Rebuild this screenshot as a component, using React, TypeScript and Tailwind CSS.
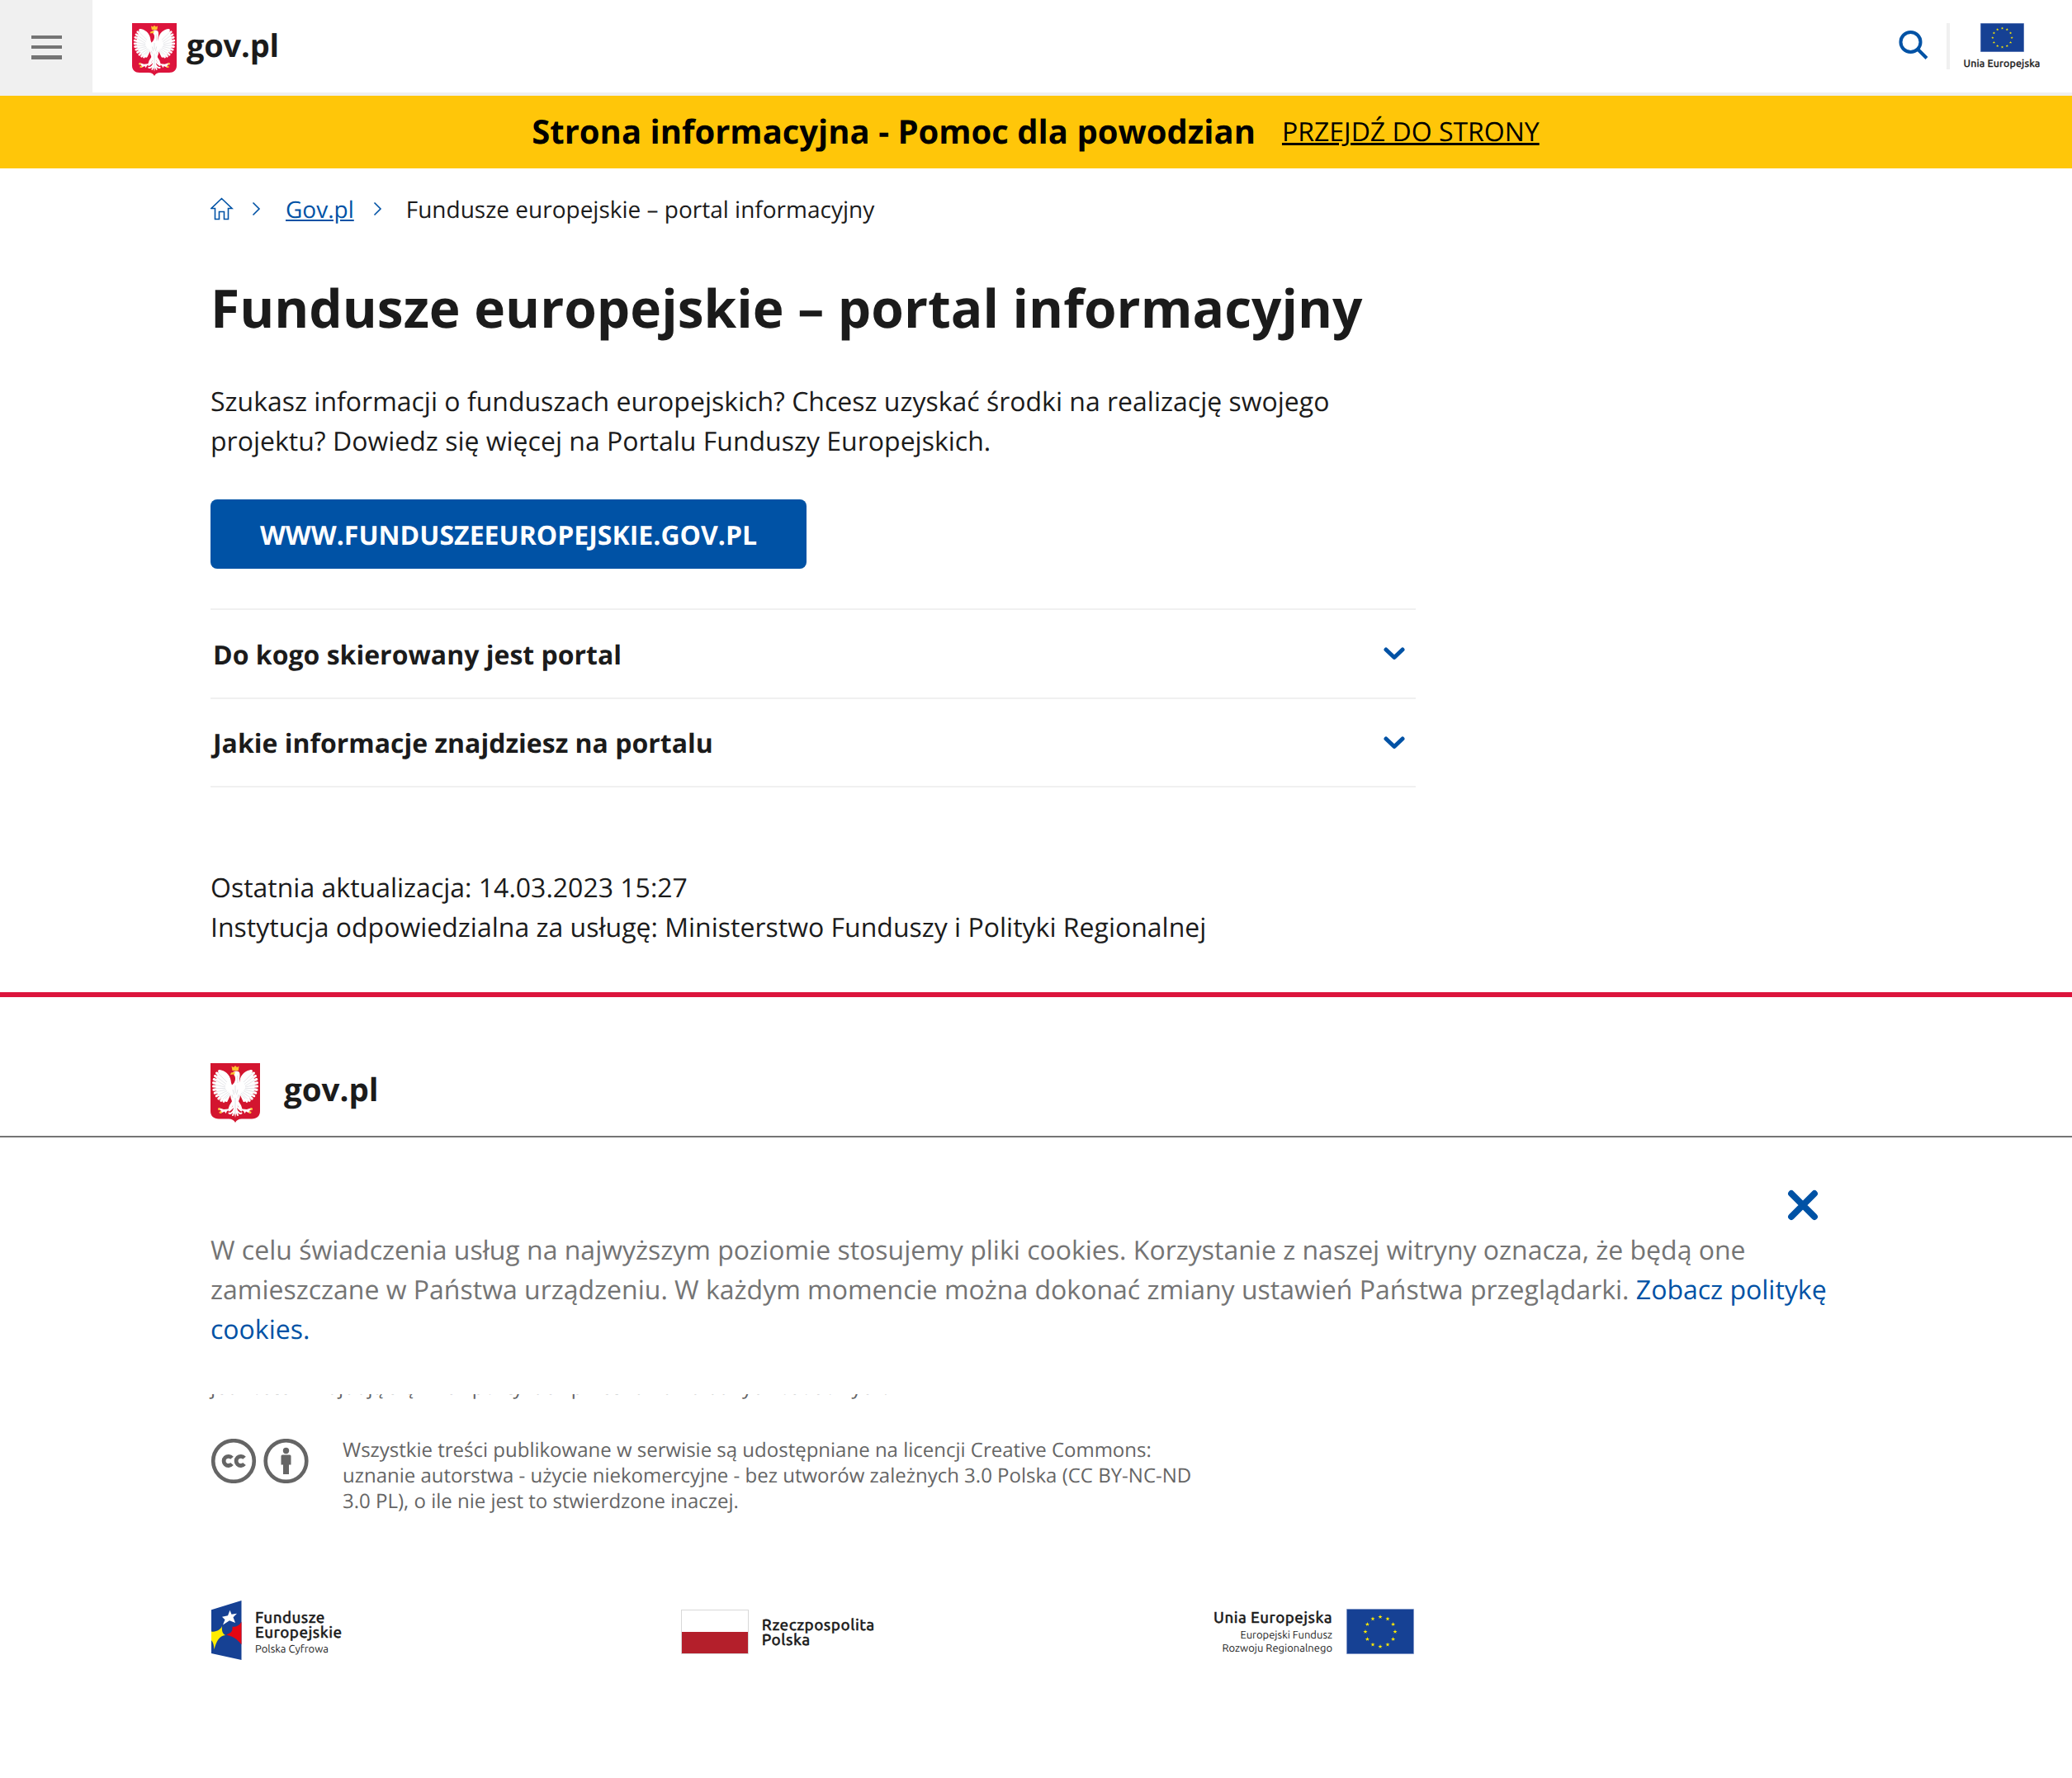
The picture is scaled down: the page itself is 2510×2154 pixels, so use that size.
const INK = 'text-[#1b1b1b]';

const FEATHERS = [
  'M20 20L10.500 9.500', 'M20 22L7.500 12', 'M20 24L5.500 15.500', 'M20 26L4.200 19.500', 'M20 28L3.500 23.700',
  'M20 29L3.500 28', 'M20 30L3.900 32.200', 'M20 31L5.200 36.200', 'M21 32L7.200 39.800', 'M22 33L9.800 43',
  'M23 33L12.800 45.300', 'M24 33L16 46.300', 'M25 33L19.200 45.500',
].join('');

function Wing() {
  return (
    <>
      <path d={FEATHERS} stroke="#fff" strokeWidth="3" strokeLinecap="round" fill="none" />
      <path d="M10.500 8C17.500 8.500 23.500 14 24.600 21C25 25 26 27 28 28L27.500 39L24.500 38C21 43 16 44.500 12 41.500C6 36 5 25 8 16Z" fill="#fff" />
      <path
        d="M9.500 12.500L20 23M7 16L19 25.500M5.500 20L18 27.500M5 26L18 29M5 30.500L18 30.500M6 35L19 32M8.500 39L20 33.500M11.500 42L21.500 35M15 43.500L23 36M18 43L24.500 37"
        stroke="#d0d2d8"
        strokeWidth=".55"
        fill="none"
      />
    </>
  );
}

function Eagle({ className, red }: { className: string; red: string }) {
  return (
    <svg className={className} viewBox="0 0 60 72" preserveAspectRatio="none" aria-hidden="true">
      <path d="M0 0H60V58C60 64 56 67.500 50 67.500H38C34 67.500 31.500 69 30 72C28.500 69 26 67.500 22 67.500H10C4 67.500 0 64 0 58Z" fill={red} />
      <Wing />
      <g transform="translate(60 0) scale(-1 1)">
        <Wing />
      </g>
      <g fill="#fff">
        <path d="M27 11.500C28 9 34 8.500 35.300 12C36 15 35 18 35 21C35 25 37 28 36.500 33L35.500 42C34 46 33 49 32.500 53L30 66L27.500 53C27 49 26 46 24.500 42L23.500 33C23 29 26 27 28.500 24C30.500 21 30.500 17 29 15Z" />
        <path d="M24 38L28 43L23 51L21.500 55.500L16 56L10 54L9 56L13 57.500L10.500 60L13 60.500L17 58.500L18.500 61L20 58L25 55.500L29.500 46Z" />
        <path d="M36 38L32 43L37 51L38.500 55.500L44 56L50 54L51 56L47 57.500L49.500 60L47 60.500L43 58.500L41.500 61L40 58L35 55.500L30.500 46Z" />
      </g>
      <g stroke="#fff" fill="none" strokeLinecap="round" strokeWidth="2">
        <path d="M28 52C27 55 24 56.500 22.500 57.500M28.500 56C27.500 59 24 62 22.500 60.500M29 58L27 63M32 52C33 55 36 56.500 37.500 57.500M31.500 56C32.500 59 36 62 37.500 60.500M31 58L33 63" />
      </g>
      <g stroke="#c9cbd1" strokeWidth=".6" fill="none">
        <path d="M30 27V36M27 32L28.500 38M33 32L31.500 38M30 42V62M26 38L27 42M34 38L33 42M32.500 15L33 24" />
      </g>
      <g fill="#fdc32f">
        <path d="M25.500 3.800L28 5L30 3L32 5L34.500 3.800L33.700 9H26.500Z" />
        <path d="M30 10.500L25 11.500L24 14L28 13.500L28.500 15Z" />
        <path d="M8.800 55L11 54L12 56L9.800 57.200ZM10.500 59L13 58L14 60L11 61ZM51.200 55L49 54L48 56L50.200 57.200ZM49.500 59L47 58L46 60L49 61Z" />
      </g>
    </svg>
  );
}

const STAR = 'M0 -2.700L.62 -.85L2.570 -.83L1 .33L1.590 2.180L0 1.050L-1.590 2.180L-1 .33L-2.570 -.83L-.62 -.85Z';

function EuFlag({ className }: { className: string }) {
  return (
    <svg className={className} viewBox="0 0 82 55" preserveAspectRatio="none" aria-hidden="true">
      <rect width="82" height="55" fill="#aab8dc" />
      <rect x=".7" y=".7" width="80.600" height="53.600" fill="#164194" />
      {Array.from({ length: 12 }, (_, i) => (
        <path
          key={i}
          d={STAR}
          fill="#ffec00"
          transform={`translate(${41 + 18 * Math.sin((i * Math.PI) / 6)} ${27.8 - 18 * Math.cos((i * Math.PI) / 6)})`}
        />
      ))}
    </svg>
  );
}

function Crumb() {
  return (
    <svg className="h-[18px] w-[11px]" viewBox="0 0 11 18" fill="none" stroke="#0052a5" strokeWidth="1.600">
      <path d="M1.500 1.500L9 9L1.500 16.500" />
    </svg>
  );
}

function Accordion({ title }: { title: string }) {
  return (
    <div className="flex h-[107.500px] items-center justify-between border-b-2 border-[#f0f0f0] pt-[4px] pr-[13px] pl-[3px]">
      <span className="text-[32px] leading-[48px] font-bold">{title}</span>
      <svg className="mb-[3px] h-[16px] w-[26px]" viewBox="0 0 26 16" fill="none" stroke="#0052a5" strokeWidth="5" strokeLinecap="round" strokeLinejoin="round">
        <path d="M3 3L13 12.500L23 3" />
      </svg>
    </div>
  );
}

export default function App() {
  return (
    <div className={`relative h-[2154px] w-[2510px] overflow-hidden bg-white font-['Open_Sans',sans-serif] [text-rendering:geometricPrecision] ${INK}`}>
      <header className="flex h-[116px] border-b-4 border-[#f0f0f0]">
        <button className="flex h-[116px] w-[112px] flex-col items-start bg-[#f0f0f0] pt-[43px] pl-[38px]">
          <span className="h-1 w-[37px] bg-[#747474]" />
          <span className="mt-2 h-1 w-[37px] bg-[#747474]" />
          <span className="mt-2 h-[5px] w-[37px] bg-[#747474]" />
        </button>
        <Eagle className="mt-7 ml-12 h-16 w-[54px]" red="#dc143c" />
        <span className="mt-[28px] ml-[12px] text-[38px] leading-[54px] font-bold tracking-[-0.2px]">gov.pl</span>
        <div className="ml-auto flex pt-7">
          <svg className="mt-[9px] h-[36px] w-[36px]" viewBox="0 0 36 36" fill="none" stroke="#0052a5" strokeWidth="4">
            <circle cx="14.500" cy="14" r="12" />
            <path d="M23 22.500L34 33.500" />
          </svg>
          <div className="ml-[22px] h-14 w-1 bg-[#f0f0f0]" />
          <div className="mr-[38px] ml-[16px] flex w-[94px] flex-col items-center">
            <EuFlag className="h-[35px] w-[53px]" />
            <span className="mt-[6px] font-[Ubuntu,'Noto_Sans',sans-serif] text-[12.400px] leading-[17px] font-medium tracking-[0.15px] whitespace-nowrap [-webkit-text-stroke:0.3px_#1b1b1b]">
              Unia Europejska
            </span>
          </div>
        </div>
      </header>

      <div className="flex h-[88px] items-center justify-center gap-8 bg-[#ffc609] pr-[1px] pb-[2px] text-black">
        <strong className="text-[40px] leading-[54px]">Strona informacyjna - Pomoc dla powodzian</strong>
        <a className="mt-[2px] text-[32px] leading-[48px] underline">PRZEJDŹ DO STRONY</a>
      </div>

      <main className="pl-[255px]">
        <nav className="mt-[27px] flex h-[44px] items-center text-[28px] leading-[42px]">
          <svg className="h-[28px] w-[28px]" viewBox="0 0 28 28" fill="none" stroke="#0052a5" strokeWidth="1.600">
            <path d="M13.500 1.500L1 13.500H5.500V26.500H10.500V17.500H16.500V26.500H21.500V13.500H26Z" />
          </svg>
          <div className="mr-[30px] ml-[22px] flex"><Crumb /></div>
          <a className="mt-[2px] text-[#0052a5] underline">Gov.pl</a>
          <div className="mr-[29px] ml-[23px] flex"><Crumb /></div>
          <span className="mt-[2px]">Fundusze europejskie – portal informacyjny</span>
        </nav>
        <h1 className="mt-[54px] text-[64px] leading-[88px] font-bold">Fundusze europejskie – portal informacyjny</h1>
        <p className="mt-[46px] w-[1462px] text-[32px] leading-[48px]">
          Szukasz informacji o funduszach europejskich? Chcesz uzyskać środki na realizację swojego
          <br />
          projektu? Dowiedz się więcej na Portalu Funduszy Europejskich.
        </p>
        <a className="mt-[46px] flex h-[84px] w-[722px] items-center justify-center rounded-lg bg-[#0052a5] pt-[4px] text-[32px] leading-[48px] font-bold text-white">
          WWW.FUNDUSZEEUROPEJSKIE.GOV.PL
        </a>
        <section className="mt-[48px] w-[1460px] border-t-2 border-[#f0f0f0]">
          <Accordion title="Do kogo skierowany jest portal" />
          <Accordion title="Jakie informacje znajdziesz na portalu" />
        </section>
        <p className="mt-[98px] text-[32px] leading-[48px]">
          Ostatnia aktualizacja: 14.03.2023 15:27
          <br />
          Instytucja odpowiedzialna za usługę: Ministerstwo Funduszy i Polityki Regionalnej
        </p>
      </main>

      <footer className="mt-[54px] border-t-[6px] border-[#dc143c] pl-[255px]">
        <div className="mt-[80px] flex h-[72px]">
          <Eagle className="h-[72px] w-[60px]" red="#d3152f" />
          <span className="mt-[5px] ml-[29px] text-[38.500px] leading-[54px] font-bold">gov.pl</span>
        </div>
        <p className="mt-[305px] h-[31px] text-[24px] leading-[31px] text-[#656565]">
          jednostek znajdują się w ich politykach przetwarzania danych osobowych.
        </p>
        <div className="mt-[45px] flex">
          <svg className="mt-[2px] h-[54px] w-[120px]" viewBox="0 0 120 54" fill="none" stroke="#656565">
            <circle cx="28" cy="27" r="24.800" strokeWidth="4.600" />
            <circle cx="91.500" cy="27" r="24.800" strokeWidth="4.600" />
            <path d="M26 23.300A5.600 5.600 0 1 0 26 30.500M41 23.300A5.600 5.600 0 1 0 41 30.500" strokeWidth="4.800" />
            <g fill="#656565" stroke="none">
              <circle cx="91.500" cy="14.500" r="3.700" />
              <path d="M87 19.500H96A1.500 1.500 0 0 1 97.500 21V31.500H95V43H88V31.500H85.500V21A1.500 1.500 0 0 1 87 19.500Z" />
            </g>
          </svg>
          <p className="ml-[40px] text-[24px] leading-[31px] text-[#656565]">
            Wszystkie treści publikowane w serwisie są udostępniane na licencji Creative Commons:
            <br />
            uznanie autorstwa - użycie niekomercyjne - bez utworów zależnych 3.0 Polska (CC BY-NC-ND
            <br />
            3.0 PL), o ile nie jest to stwierdzone inaczej.
          </p>
        </div>
        <div className="mt-[105px] flex h-[76px] w-[1458px] items-start justify-between font-[Ubuntu,'Noto_Sans',sans-serif]">
          <div className="flex">
            <svg className="h-[72px] w-[38px]" viewBox="0 0 38 73" preserveAspectRatio="none">
              <path d="M1 11.500L37.500 0V73L1 65Z" fill="#164194" />
              <path d="M23.500 12L25.500 17L32 16L27.500 20.500L30 27.500L23 24.500L15 30L17.500 23.500L14 20L21 18.500Z" fill="#fff" />
              <path d="M1 38C7 39 12 36 14 31.500C13.500 37 14.500 41 18 42.500C11 43 7 50 4.500 60C4 54 3 51 1 49Z" fill="#ffec00" />
              <path d="M37.500 26V54C34 50 31 45 19 42C25 40 27 38 26.500 32C30 33 35 31 37.500 26Z" fill="#e30613" />
            </svg>
            <div className="mt-[11px] ml-[16px] flex flex-col">
              <span className="text-[18.800px] leading-[18px] font-medium tracking-wide [-webkit-text-stroke:0.4px_#1b1b1b]">Fundusze</span>
              <span className="text-[18.800px] leading-[18px] font-medium tracking-wide [-webkit-text-stroke:0.4px_#1b1b1b]">Europejskie</span>
              <span className="mt-[4px] text-[13px] leading-[16px]">Polska Cyfrowa</span>
            </div>
          </div>
          <div className="flex items-start pt-[11px]">
            <div className="flex h-[54px] w-[82px] flex-col border border-[#d8d8d8]">
              <div className="h-[26px]" />
              <div className="grow bg-[#b41f2b]" />
            </div>
            <div className="mt-[9px] ml-[16px] flex flex-col text-[18.900px] leading-[18px] font-medium tracking-wide [-webkit-text-stroke:0.4px_#1b1b1b]">
              <span>Rzeczpospolita</span>
              <span>Polska</span>
            </div>
          </div>
          <div className="flex items-start pt-[10px]">
            <div className="mr-[17px] flex flex-col items-end">
              <span className="mt-[1px] text-[18.700px] leading-[20px] font-medium tracking-wide [-webkit-text-stroke:0.4px_#1b1b1b]">Unia Europejska</span>
              <span className="mt-[3px] text-[13px] leading-[16px]">Europejski Fundusz</span>
              <span className="text-[13px] leading-[16px]">Rozwoju Regionalnego</span>
            </div>
            <EuFlag className="h-[55px] w-[82px]" />
          </div>
        </div>
      </footer>

      <aside className="absolute top-[1376px] left-0 h-[313px] w-[2510px] border-t-2 border-[#747474] bg-white pl-[255px]">
        <svg className="absolute top-[63px] left-[2165px] h-[38px] w-[38px]" viewBox="0 0 38 38" stroke="#0052a5" strokeWidth="7.800" strokeLinecap="round">
          <path d="M5 5L33 33M33 5L5 33" />
        </svg>
        <p className="mt-[113px] w-[2000px] text-[32px] leading-[48px] text-[#747474]">
          W celu świadczenia usług na najwyższym poziomie stosujemy pliki cookies. Korzystanie z naszej witryny oznacza, że będą one
          <br />
          zamieszczane w Państwa urządzeniu. W każdym momencie można dokonać zmiany ustawień Państwa przeglądarki.{' '}
          <a className="text-[#0052a5]">
            Zobacz politykę
            <br />
            cookies.
          </a>
        </p>
      </aside>
    </div>
  );
}
